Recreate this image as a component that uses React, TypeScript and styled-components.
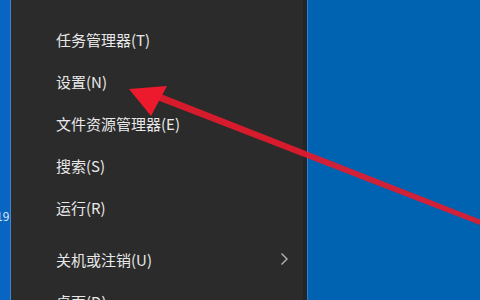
import styled, { createGlobalStyle } from 'styled-components'

const GlobalStyle = createGlobalStyle`
  html, body {
    margin: 0;
    padding: 0;
    width: 480px;
    height: 300px;
    overflow: hidden;
    background: #0063b1;
  }
`

const Screen = styled.div`
  position: relative;
  display: flex;
  width: 480px;
  height: 300px;
  overflow: hidden;
  font-family: "Noto Sans CJK SC", "Noto Sans", sans-serif;
`

const LeftStrip = styled.div`
  width: 11px;
  flex: none;
  background: #0865c2;
  border-right: 1px solid #3d86cf;
  display: flex;
  flex-direction: column;
  justify-content: flex-end;
  padding-bottom: 78px;
  box-sizing: border-box;
  overflow: hidden;
`

const Clock = styled.span`
  color: #dce9f7;
  font-size: 12px;
  margin-left: -4px;
  line-height: 1;
`

const Menu = styled.div`
  width: 296px;
  flex: none;
  background: #2b2b2b;
  border-right: 4px solid #232526;
  padding-top: 12px;
  box-sizing: border-box;
  display: flex;
  flex-direction: column;
`

const Separator = styled.div<{ $top?: number }>`
  height: 2px;
  margin: ${({ $top = 0 }) => `${$top}px 11px 6px 13px`};
  background: #6a6a6a;
`

const Item = styled.div`
  height: 42px;
  flex: none;
  display: flex;
  align-items: center;
  justify-content: space-between;
  padding: 0 14px 0 45px;
  color: #e8e8e8;
  font-size: 15px;
`

const Chevron = styled.svg`
  width: 9px;
  height: 14px;
`

const Desktop = styled.div`
  flex: 1;
  background: #0063b1;
  border-left: 1px solid #2f7fcc;
`

const Overlay = styled.svg`
  position: absolute;
  left: 0;
  top: 0;
  width: 480px;
  height: 300px;
  pointer-events: none;
`

const topItems = ['任务管理器(T)', '设置(N)', '文件资源管理器(E)', '搜索(S)', '运行(R)']

export default function App() {
  return (
    <>
      <GlobalStyle />
      <Screen>
        <LeftStrip>
          <Clock>19</Clock>
        </LeftStrip>
        <Menu>
          <Separator />
          {topItems.map((label) => (
            <Item key={label}>{label}</Item>
          ))}
          <Separator $top={4} />
          <Item>
            关机或注销(U)
            <Chevron viewBox="0 0 9 14">
              <polyline points="1.5,1.5 7,7 1.5,12.5" fill="none" stroke="#b5b5b5" strokeWidth="1.4" />
            </Chevron>
          </Item>
          <Item>桌面(D)</Item>
        </Menu>
        <Desktop />
        <Overlay viewBox="0 0 480 300">
          <polygon
            points="151.3,90.2 490.9,223.8 489.1,228.4 148.7,96.8"
            fill="#e8192c"
            opacity="0.9"
          />
          <polygon points="129,89 167,86 151,116" fill="#ec1a2c" />
        </Overlay>
      </Screen>
    </>
  )
}
